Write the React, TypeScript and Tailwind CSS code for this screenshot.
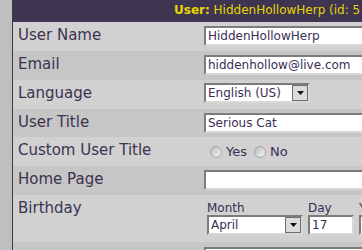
import type { ReactNode } from 'react';

const inset =
  'border-2 border-t-[#7c7c7c] border-l-[#7c7c7c] border-b-[#d8d8d8] border-r-[#d8d8d8] bg-white';

function Row({ label, dark, h, children }: { label: string; dark?: boolean; h: string; children?: ReactNode }) {
  return (
    <div className={`flex ${h} ${dark ? 'bg-[#c6c6c6]' : 'bg-[#d1d1d1]'}`}>
      <div className="w-[191px] shrink-0 pl-[5px] pt-1 text-[15px] leading-[18px] text-[#3b3350] whitespace-nowrap">
        {label}
      </div>
      <div className="flex-1 min-w-0">{children}</div>
    </div>
  );
}

function TextBox({ value, w }: { value: string; w: string }) {
  return (
    <div className={`${inset} ${w} h-[20px] mt-1 pl-[2px] text-[12px] leading-[16px] text-[#3a2e55] whitespace-nowrap overflow-hidden`}>
      {value}
    </div>
  );
}

function DropArrow() {
  return (
    <span className="w-[16px] h-[16px] border border-[#6f6f6f] bg-[#dcdcdc] flex items-center justify-center shrink-0">
      <svg width="7" height="4" viewBox="0 0 7 4">
        <path d="M0 0h7L3.5 4z" fill="#111" />
      </svg>
    </span>
  );
}

function Select({ value, w }: { value: string; w: string }) {
  return (
    <div className={`${inset} ${w} h-[20px] flex items-center justify-between pl-[2px] text-[12px] leading-[16px] text-[#3a2e55] whitespace-nowrap`}>
      <span>{value}</span>
      <DropArrow />
    </div>
  );
}

function Radio({ label }: { label: string }) {
  return (
    <span className="flex items-center gap-[4px]">
      <span className="w-[12px] h-[12px] rounded-full border border-[#a4a4a4] bg-[linear-gradient(135deg,#b9b9b9,#f6f6f6)]" />
      <span>{label}</span>
    </span>
  );
}

export default function App() {
  return (
    <div className="w-[362px] h-[250px] overflow-hidden bg-[#bfbfbf] pl-[12px] font-['DejaVu_Sans',sans-serif]">
      <div className="border-l border-[#3e3550] h-full">
        <div className="h-[22px] bg-[#3e3550] pl-[161px] pt-[3px] text-[12px] leading-[15px] text-[#e8d400] whitespace-nowrap overflow-hidden">
          <span className="font-bold">User:</span> HiddenHollowHerp (id: 5
        </div>
        <Row label="User Name" h="h-[29px]">
          <TextBox value="HiddenHollowHerp" w="w-[200px]" />
        </Row>
        <Row label="Email" dark h="h-[29px]">
          <TextBox value="hiddenhollow@live.com" w="w-[200px]" />
        </Row>
        <Row label="Language" h="h-[29px]">
          <div className="mt-[3px]">
            <Select value="English (US)" w="w-[106px]" />
          </div>
        </Row>
        <Row label="User Title" dark h="h-[28px]">
          <TextBox value="Serious Cat" w="w-[200px]" />
        </Row>
        <Row label="Custom User Title" h="h-[29px]">
          <div className="flex items-center gap-[7px] pl-[6px] h-full text-[13px] text-[#3a2e55]">
            <Radio label="Yes" />
            <Radio label="No" />
          </div>
        </Row>
        <Row label="Home Page" dark h="h-[29px]">
          <TextBox value="" w="w-[200px]" />
        </Row>
        <Row label="Birthday" h="h-[47px]">
          <div className="flex gap-[5px] pl-[3px] pt-[7px] text-[12px] leading-[13px] text-[#3a2e55] whitespace-nowrap">
            <div>
              <div>Month</div>
              <Select value="April" w="w-[96px]" />
            </div>
            <div>
              <div>Day</div>
              <div className={`${inset} w-[46px] h-[20px] pl-[2px] leading-[16px]`}>17</div>
            </div>
            <div>
              <div>Year</div>
              <div className={`${inset} w-[50px] h-[20px]`} />
            </div>
          </div>
        </Row>
        <Row label="" dark h="h-[29px]">
          <div className="pt-[5px]">
            <div className={`${inset} w-[200px] h-[20px]`} />
          </div>
        </Row>
      </div>
    </div>
  );
}
